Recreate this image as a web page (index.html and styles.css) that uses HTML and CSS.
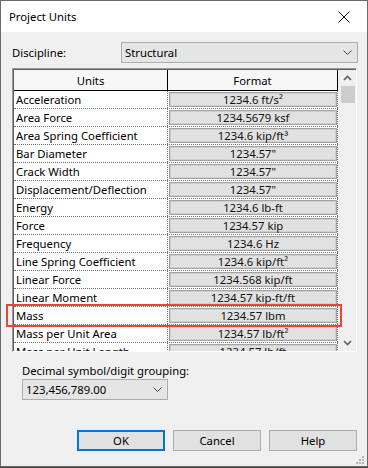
FILE: index.html
```html
<!DOCTYPE html>
<html lang="en">
<head>
  <meta charset="UTF-8">
  <title>Project Units</title>
  <link rel="stylesheet" href="styles.css">
</head>
<body>
  <div class="window">
    <div class="titlebar">
      <span class="title">Project Units</span>
      <span class="close">
        <svg width="12" height="12" viewBox="0 0 12 12"><path d="M0.5 0.5 L11.5 11.5 M11.5 0.5 L0.5 11.5" stroke="#111" stroke-width="1"/></svg>
      </span>
    </div>

    <div class="content">
      <div class="discipline">
        <span class="label">Discipline:</span>
        <div class="combo combo-wide">
          <span>Structural</span>
          <svg class="chev" width="9" height="5" viewBox="0 0 9 5"><path d="M0.5 0.5 L4.5 4.5 L8.5 0.5" fill="none" stroke="#444" stroke-width="1"/></svg>
        </div>
      </div>

      <div class="grid-wrap">
        <div class="grid-frame">
          <div class="grid">
            <div class="header">
              <div class="hcell units-col">Units</div>
              <div class="hcell format-col">Format</div>
            </div>
            <div class="rows" id="rows"></div>
          </div>
          <div class="scrollbar">
            <div class="arrow">
              <svg width="9" height="6" viewBox="0 0 9 6"><path d="M1 5 L4.5 1.5 L8 5" fill="none" stroke="#606060" stroke-width="1.6"/></svg>
            </div>
            <div class="thumb"></div>
            <div class="track"></div>
            <div class="arrow">
              <svg width="9" height="6" viewBox="0 0 9 6"><path d="M1 1 L4.5 4.5 L8 1" fill="none" stroke="#606060" stroke-width="1.6"/></svg>
            </div>
          </div>
        </div>
        <div class="mark"></div>
      </div>

      <div class="decimal">
        <span class="label">Decimal symbol/digit grouping:</span>
        <div class="combo combo-small">
          <span>123,456,789.00</span>
          <svg class="chev" width="9" height="5" viewBox="0 0 9 5"><path d="M0.5 0.5 L4.5 4.5 L8.5 0.5" fill="none" stroke="#444" stroke-width="1"/></svg>
        </div>
      </div>

      <div class="buttons">
        <button class="btn btn-default">OK</button>
        <button class="btn">Cancel</button>
        <button class="btn">Help</button>
      </div>
      <div class="grip">
        <svg width="9" height="9" viewBox="0 0 9 9" fill="#b4b4b4">
          <rect x="6" y="0" width="2" height="2"/>
          <rect x="3" y="3" width="2" height="2"/><rect x="6" y="3" width="2" height="2"/>
          <rect x="0" y="6" width="2" height="2"/><rect x="3" y="6" width="2" height="2"/><rect x="6" y="6" width="2" height="2"/>
        </svg>
      </div>
    </div>
  </div>

  <script>
    // unit name and its sample format
    const units = [
      ["Acceleration", "1234.6 ft/s²"],
      ["Area Force", "1234.5679 ksf"],
      ["Area Spring Coefficient", "1234.6 kip/ft³"],
      ["Bar Diameter", "1234.57\""],
      ["Crack Width", "1234.57\""],
      ["Displacement/Deflection", "1234.57\""],
      ["Energy", "1234.6 lb-ft"],
      ["Force", "1234.57 kip"],
      ["Frequency", "1234.6 Hz"],
      ["Line Spring Coefficient", "1234.6 kip/ft²"],
      ["Linear Force", "1234.568 kip/ft"],
      ["Linear Moment", "1234.57 kip-ft/ft"],
      ["Mass", "1234.57 lbm"],
      ["Mass per Unit Area", "1234.57 lb/ft²"],
      ["Mass per Unit Length", "1234.57 lb/ft"]
    ];

    const rows = document.getElementById("rows");
    units.forEach(([name, format]) => {
      const row = document.createElement("div");
      row.className = "row";
      row.innerHTML =
        `<div class="cell units-col">${name}</div>` +
        `<div class="cell format-col"><div class="fmt">${format}</div></div>`;
      rows.appendChild(row);
    });
  </script>
</body>
</html>
```

FILE: styles.css
```css
body {
  margin: 0;
  background: #4b3d31;
  font-family: "Segoe UI", "Noto Sans", sans-serif;
  font-size: 11.3px;
  color: #000;
}

.window {
  width: 366px;
  height: 465px;
  border: 1px solid #6b6b6b;
  display: flex;
  flex-direction: column;
  background: #f0f0f0;
}

.titlebar {
  height: 31px;
  background: #fff;
  display: flex;
  align-items: center;
  justify-content: space-between;
  padding-left: 8px;
}

.close {
  width: 46px;
  display: flex;
  justify-content: center;
  padding-top: 1px;
}

.content {
  flex: 1;
  position: relative;
  padding: 10px 9px 0 11px;
}

.discipline {
  display: flex;
  align-items: center;
  height: 21px;
}

.discipline .label {
  width: 109px;
}

.combo {
  height: 21px;
  box-sizing: border-box;
  border: 1px solid #adadad;
  background: #e5e5e5;
  display: flex;
  align-items: center;
  justify-content: space-between;
  padding: 0 5px 0 3px;
}

.combo-wide {
  width: 237px;
}

.combo-small {
  width: 146px;
  margin-top: 1px;
}

.grid-wrap {
  position: relative;
  margin-top: 5px;
}

.grid-frame {
  width: 345px;
  height: 284px;
  box-sizing: border-box;
  border-top: 1px solid #9a9a9a;
  border-left: 1px solid #9a9a9a;
  border-right: 1px solid #fff;
  border-bottom: 1px solid #fff;
  box-shadow: inset 1px 1px 0 #5f5f5f;
  padding: 1px 0 0 1px;
  display: flex;
  overflow: hidden;
}

.grid {
  width: 325px;
  background: #fff;
}

.header {
  display: flex;
  height: 21px;
  box-sizing: border-box;
  border-bottom: 1px solid #000;
  background: #f7f7f7;
}

.hcell {
  display: flex;
  align-items: center;
  justify-content: center;
  box-sizing: border-box;
  border-right: 1px solid #000;
}

.units-col {
  width: 154px;
}

.format-col {
  width: 170px;
}

.row {
  display: flex;
  height: 18px;
  box-sizing: border-box;
  border-bottom: 1px dotted #6e6e6e;
}

.cell {
  box-sizing: border-box;
  border-right: 1px dotted #6e6e6e;
}

.cell.units-col {
  padding-left: 2px;
  line-height: 17px;
  white-space: nowrap;
  overflow: hidden;
}

.fmt {
  margin: 1px 0 0 1px;
  width: 168px;
  height: 15px;
  box-sizing: border-box;
  border: 1px solid #a2a2a2;
  box-shadow: inset 0 0 0 1px #cfcfcf;
  background: #e1e1e1;
  display: flex;
  align-items: center;
  justify-content: center;
  color: #111;
}

.scrollbar {
  width: 17px;
  margin-left: 1px;
  background: #f0f0f0;
  display: flex;
  flex-direction: column;
}

.arrow {
  height: 16px;
  display: flex;
  align-items: center;
  justify-content: center;
}

.thumb {
  height: 17px;
  margin: 0 1px 0 2px;
  background: #cdcdcd;
}

.track {
  flex: 1;
}

.mark {
  position: absolute;
  left: -6px;
  top: 236px;
  width: 336px;
  height: 23px;
  box-sizing: border-box;
  border: 2px solid #e8453c;
}

.decimal {
  margin-top: 12px;
  padding-left: 10px;
}

.decimal .label {
  display: block;
  line-height: 14px;
}

.buttons {
  display: flex;
  justify-content: flex-end;
  gap: 8px;
  margin-top: 30px;
  padding-right: 1px;
}

.btn {
  width: 88px;
  height: 21px;
  box-sizing: border-box;
  border: 1px solid #adadad;
  background: #e1e1e1;
  font-family: inherit;
  font-size: 11.3px;
  color: #000;
  padding: 0;
}

.btn-default {
  border: 2px solid #0078d7;
}

.grip {
  position: absolute;
  right: 2px;
  bottom: 1px;
  line-height: 0;
}
```
